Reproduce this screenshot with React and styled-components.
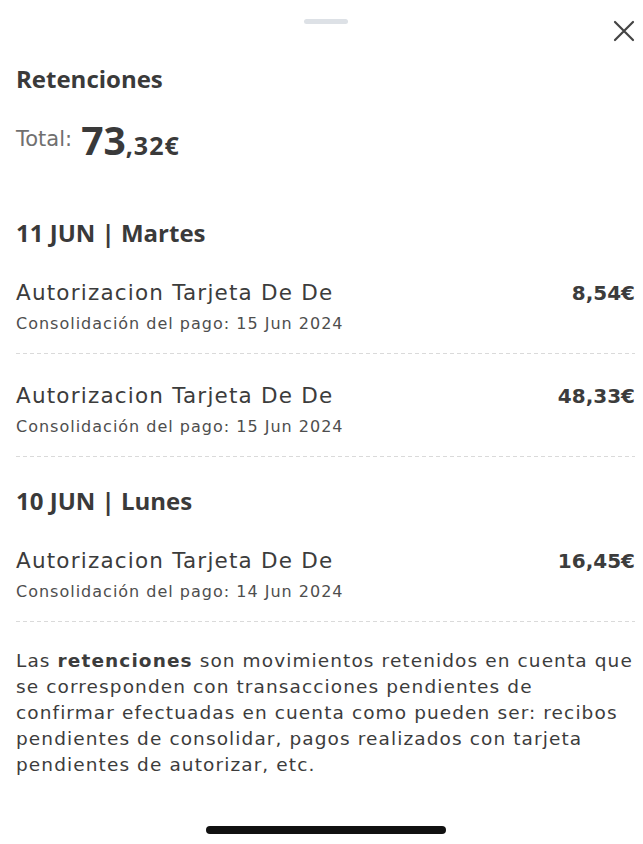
import styled, { createGlobalStyle } from "styled-components";

const GlobalStyle = createGlobalStyle`
  html, body {
    margin: 0;
    padding: 0;
    background: #fff;
  }
  body {
    font-family: "DejaVu Sans", "Open Sans", sans-serif;
    color: #3c3c3c;
  }
`;

const groups = [
  {
    date: "11 JUN",
    day: "Martes",
    items: [
      { name: "Autorizacion Tarjeta De De", date: "15 Jun 2024", amount: "8,54€" },
      { name: "Autorizacion Tarjeta De De", date: "15 Jun 2024", amount: "48,33€" },
    ],
  },
  {
    date: "10 JUN",
    day: "Lunes",
    items: [
      { name: "Autorizacion Tarjeta De De", date: "14 Jun 2024", amount: "16,45€" },
    ],
  },
];

const App = () => {
  return (
    <>
      <GlobalStyle />
      <Sheet>
        <Handle />
        <TopBar>
          <Close aria-label="Cerrar">
            <svg width="22" height="22" viewBox="0 0 22 22">
              <path
                d="M2 2 L20 20 M20 2 L2 20"
                stroke="#444"
                strokeWidth="2.2"
                strokeLinecap="round"
              />
            </svg>
          </Close>
        </TopBar>
        <Title>Retenciones</Title>
        <TotalRow>
          <TotalLabel>Total:</TotalLabel>
          <TotalInt>73</TotalInt>
          <TotalDec>,32€</TotalDec>
        </TotalRow>

        {groups.map((group) => (
          <Group key={group.date}>
            <DateHeader>
              {group.date} | {group.day}
            </DateHeader>
            {group.items.map((item, i) => (
              <Item key={i}>
                <ItemInfo>
                  <ItemName>{item.name}</ItemName>
                  <ItemSub>Consolidación del pago: {item.date}</ItemSub>
                </ItemInfo>
                <Amount>{item.amount}</Amount>
              </Item>
            ))}
          </Group>
        ))}

        <Note>
          Las <b>retenciones</b> son movimientos retenidos en cuenta que
          <br />
          se corresponden con transacciones pendientes de
          <br />
          confirmar efectuadas en cuenta como pueden ser: recibos
          <br />
          pendientes de consolidar, pagos realizados con tarjeta
          <br />
          pendientes de autorizar, etc.
        </Note>
        <HomeBar />
      </Sheet>
    </>
  );
};

const Sheet = styled.div`
  width: 643px;
  height: 844px;
  box-sizing: border-box;
  padding: 19px 8px 0 16px;
  display: flex;
  flex-direction: column;
  overflow: hidden;
`;

const Handle = styled.div`
  align-self: center;
  width: 44px;
  height: 5px;
  border-radius: 3px;
  background: #dde1e6;
`;

const TopBar = styled.div`
  display: flex;
  justify-content: flex-end;
  margin-top: -4px;
`;

const Close = styled.button`
  border: 0;
  background: none;
  padding: 0;
  width: 22px;
  height: 22px;
  display: flex;
  cursor: pointer;
`;

const Title = styled.h1`
  margin: 22px 0 0;
  font-family: "Open Sans", sans-serif;
  font-size: 24px;
  font-weight: 700;
  line-height: 30px;
  color: #3a3a3a;
`;

const TotalRow = styled.div`
  display: flex;
  align-items: baseline;
  margin-top: 25px;
  height: 42px;
`;

const TotalLabel = styled.span`
  font-size: 21px;
  color: #707070;
  margin-right: 9px;
  position: relative;
  top: -9px;
`;

const TotalInt = styled.span`
  font-family: "Open Sans", sans-serif;
  font-size: 39px;
  font-weight: 700;
  line-height: 42px;
  color: #3a3a3a;
`;

const TotalDec = styled.span`
  font-family: "Open Sans", sans-serif;
  font-size: 25px;
  font-weight: 700;
  letter-spacing: 1px;
  color: #3a3a3a;
`;

const Group = styled.section`
  display: flex;
  flex-direction: column;
  margin-top: 29px;
  &:first-of-type {
    margin-top: 57px;
  }
`;

const DateHeader = styled.h2`
  margin: 0;
  font-family: "Open Sans", sans-serif;
  font-size: 24px;
  font-weight: 700;
  line-height: 30px;
  color: #3a3a3a;
`;

const Item = styled.div`
  display: flex;
  justify-content: space-between;
  align-items: baseline;
  padding: 32px 0 18px;
  background-image: linear-gradient(to right, #dadada 4px, transparent 4px);
  background-size: 7px 1px;
  background-repeat: repeat-x;
  background-position: left bottom;
  & + & {
    padding-top: 29px;
  }
`;

const ItemInfo = styled.div`
  display: flex;
  flex-direction: column;
`;

const ItemName = styled.span`
  font-size: 21.5px;
  letter-spacing: 1.2px;
  line-height: 26px;
  color: #3c3c3c;
`;

const ItemSub = styled.span`
  margin-top: 6px;
  font-size: 16px;
  letter-spacing: 1px;
  line-height: 24px;
  color: #4e4e4e;
`;

const Amount = styled.span`
  font-size: 20px;
  font-weight: 700;
  line-height: 26px;
  color: #3c3c3c;
`;

const Note = styled.p`
  margin: 26px -8px 0 0;
  font-size: 18.5px;
  letter-spacing: 1.1px;
  line-height: 26.1px;
  color: #3c3c3c;
  b {
    font-weight: 700;
  }
`;

const HomeBar = styled.div`
  align-self: center;
  margin: auto 0 10px;
  width: 240px;
  height: 8px;
  border-radius: 4px;
  background: #111;
`;

export default App;
